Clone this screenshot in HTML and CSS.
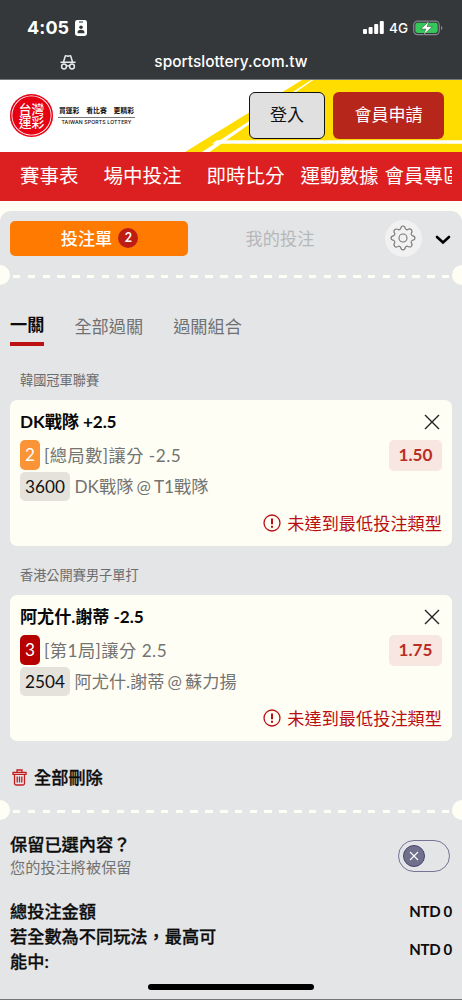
FILE: index.html
```html
<!DOCTYPE html>
<html lang="zh-Hant">
<head>
<meta charset="utf-8">
<meta name="viewport" content="width=device-width, initial-scale=1">
<title>台灣運彩</title>
<link rel="stylesheet" href="styles.css">
</head>
<body>
<div class="screen">
  <header class="phone-bar">
    <div class="status">
      <span class="clock">4:05</span>
      <svg class="id-icon" width="12" height="16" viewBox="0 0 12 16"><rect width="12" height="16" rx="2.4" fill="#fff"/><path d="M4 2h4" stroke="#35383b" stroke-width="1.1"/><circle cx="6" cy="7.3" r="1.8" fill="#35383b"/><path d="M2.6 13.3v-1.2c0-3 6.8-3 6.8 0v1.2z" fill="#35383b"/></svg>
      <svg class="signal" width="21" height="13" viewBox="0 0 21 13" fill="#fff"><rect y="8" width="4" height="5" rx="1"/><rect x="5.6" y="6" width="4" height="7" rx="1"/><rect x="11.2" y="3" width="4" height="10" rx="1"/><rect x="16.8" width="4" height="13" rx="1"/></svg>
      <span class="network">4G</span>
      <svg class="battery" width="30" height="16" viewBox="0 0 30 16"><rect x=".7" y="1.2" width="25.6" height="13.4" rx="3.8" fill="none" stroke="#85878a" stroke-width="1.2"/><rect x="2.3" y="2.8" width="22.4" height="10.2" rx="2.4" fill="#34c759"/><path d="M28 6v4q1.5-.6 1.5-2T28 6z" fill="#85878a"/><path d="M16.4.8 7.8 9h5L10.3 15.2l9-8.7h-5.2z" fill="#fff" stroke="#35383b" stroke-width=".5"/></svg>
    </div>
    <div class="address">
      <svg class="incognito" width="16" height="15" viewBox="0 0 16 15" fill="none" stroke="#e9eaeb" stroke-width="1.5"><path d="M.5 7.3h15M3.5 7 5.2 1.2q.2-.6.9-.4l1.9.4 1.9-.4q.7-.2.9.4L12.500 7"/><circle cx="4" cy="11.5" r="2.4"/><circle cx="12" cy="11.5" r="2.4"/><path d="M6.5 11.2q1.5-1 3 0"/></svg>
      <span>sportslottery.com.tw</span>
    </div>
  </header>

  <div class="banner">
    <svg class="stripes" width="462" height="72" viewBox="0 0 462 72"><path d="M185 72 302 0H462V72z" fill="#fd0"/><path d="M202 72 231 53 311 0h2.3L231 57 209.5 72z" fill="#fff"/><path d="M217 60.3H462v3.5H212z" fill="#fff"/></svg>
    <div class="brand">
      <div class="seal"><span>台灣</span><span>運彩</span></div>
      <div class="slogan">
        <div class="slogan-zh"><span>買運彩</span><span>看比賽</span><span>更精彩</span></div>
        <div class="slogan-en">TAIWAN SPORTS LOTTERY</div>
      </div>
    </div>
    <button class="btn login">登入</button>
    <button class="btn join">會員申請</button>
  </div>

  <nav class="nav"><span>賽事表</span><span>場中投注</span><span>即時比分</span><span>運動數據</span><span>會員專區</span></nav>

  <main class="slip">
    <div class="slip-head">
      <div class="slip-tab active">投注單<span class="count">2</span></div>
      <div class="slip-tab">我的投注</div>
      <div class="gear"><svg width="26" height="26" viewBox="-13 -13 26 26" fill="none" stroke="#777" stroke-width="1.1"><circle r="4"/><path d="M-2.4-9.2Q-1.9-12 0-12T2.4-9.2Q3-8.3 4.2-8.1 6.8-10 8.3-8.3T8.1-4.2Q8.3-3 9.2-2.4 12-1.9 12 0T9.2 2.4Q8.3 3 8.1 4.2 10 6.8 8.3 8.3T4.2 8.1Q3 8.3 2.4 9.2 1.9 12 0 12T-2.4 9.2Q-3 8.3-4.2 8.1-6.8 10-8.3 8.3T-8.1 4.2Q-8.3 3-9.2 2.4-12 1.9-12 0T-9.2-2.4Q-8.3-3-8.1-4.2-10-6.8-8.3-8.3T-4.2-8.1Q-3-8.3-2.4-9.2z"/></svg></div>
      <svg class="chevron" width="16" height="10" viewBox="0 0 16 10"><path d="m2 2 6 5.5L14 2" fill="none" stroke="#000" stroke-width="2.6" stroke-linecap="round"/></svg>
    </div>

    <div class="tear"><i></i></div>

    <div class="modes"><span class="mode on">一關</span><span class="mode">全部過關</span><span class="mode">過關組合</span></div>

    <div class="league">韓國冠軍聯賽</div>
    <section class="card">
      <div class="row title"><span>DK戰隊 +2.5</span><svg width="16" height="16" viewBox="0 0 16 16"><path d="m1 1 14 14M15 1 1 15" stroke="#222" stroke-width="1.4"/></svg></div>
      <div class="row pick"><span class="num orange">2</span><span class="market">[總局數]讓分 -2.5</span><span class="odds">1.50</span></div>
      <div class="row match"><span class="code">3600</span><span class="teams">DK戰隊 @ T1戰隊</span></div>
      <div class="warn"><svg width="18" height="18" viewBox="0 0 18 18"><circle cx="9" cy="9" r="8" fill="none" stroke="#b90f12" stroke-width="1.3"/><path d="M9 4.5v5.7M9 11.8v2" stroke="#b90f12" stroke-width="2"/></svg><span>未達到最低投注類型</span></div>
    </section>

    <div class="league">香港公開賽男子單打</div>
    <section class="card">
      <div class="row title"><span>阿尤什.謝蒂 -2.5</span><svg width="16" height="16" viewBox="0 0 16 16"><path d="m1 1 14 14M15 1 1 15" stroke="#222" stroke-width="1.4"/></svg></div>
      <div class="row pick"><span class="num red">3</span><span class="market narrow">[第1局]讓分 2.5</span><span class="odds">1.75</span></div>
      <div class="row match"><span class="code">2504</span><span class="teams">阿尤什.謝蒂 @ 蘇力揚</span></div>
      <div class="warn"><svg width="18" height="18" viewBox="0 0 18 18"><circle cx="9" cy="9" r="8" fill="none" stroke="#b90f12" stroke-width="1.3"/><path d="M9 4.5v5.7M9 11.8v2" stroke="#b90f12" stroke-width="2"/></svg><span>未達到最低投注類型</span></div>
    </section>

    <div class="clear"><svg width="15" height="17" viewBox="0 0 15 17" fill="none" stroke="#c51c1f" stroke-width="1.3"><path d="M5 3V1h5v2M1 3.3h13v2H1zM2.5 5.5v9q0 1.5 1.5 1.5h7q1.500 0 1.500-1.500v-9M5.200 7.500v6M7.500 7.500v6M9.800 7.500v6"/></svg><span>全部刪除</span></div>

    <div class="tear"><i></i></div>

    <div class="keep">
      <div><div class="keep-title">保留已選內容？</div><div class="keep-note">您的投注將被保留</div></div>
      <div class="toggle"><span class="knob"><svg width="10" height="10" viewBox="0 0 10 10"><path d="m1 1 8 8M9 1 1 9" stroke="#fff" stroke-width="1.1"/></svg></span></div>
    </div>
    <div class="totals">
      <div class="total"><span>總投注金額</span><b>NTD 0</b></div>
      <div class="total"><span>若全數為不同玩法，最高可能中:</span><b>NTD 0</b></div>
    </div>
    <div class="home"></div>
  </main>
</div>
</body>
</html>
```
FILE: styles.css
```css
* { box-sizing: border-box; }
body { margin: 0; background: #fffef5; color: #0c0c0c; font-family: Lato, "Noto Sans CJK TC", sans-serif; }
svg { display: block; flex: none; }
span { white-space: nowrap; }
.screen { width: 462px; height: 1000px; overflow: hidden; display: flex; flex-direction: column; }

.phone-bar { height: 80px; flex: none; background: #35383b; color: #fff; border-bottom: 1px solid #77797b; font-family: Inter, sans-serif; }
.status { display: flex; align-items: center; height: 38px; padding: 17px 19px 0 27px; }
.clock { font-size: 18px; font-weight: 700; width: 43px; letter-spacing: .1px; }
.id-icon { margin-left: 5px; }
.signal { margin-left: auto; }
.network { font-size: 13.5px; font-weight: 500; margin: 0 5px; }
.address { position: relative; display: flex; justify-content: center; height: 41px; padding-top: 14px; font-size: 15.4px; line-height: 20px; font-weight: 500; letter-spacing: .03px; }
.incognito { position: absolute; left: 60px; top: 17px; }

.banner { position: relative; height: 72px; flex: none; background: #fff; display: flex; align-items: center; padding: 0 18px 1px 10px; }
.stripes { position: absolute; left: 0; top: 0; }
.brand { display: flex; align-items: center; gap: 5px; margin-right: auto; z-index: 1; }
.seal { width: 43px; height: 43px; border-radius: 50%; background: #e60012; box-shadow: inset 0 0 0 1.5px #e60012, inset 0 0 0 2.3px #fff; color: #fff; display: flex; flex-direction: column; align-items: center; justify-content: center; font-size: 12.8px; line-height: 13px; font-weight: 500; }
.slogan { width: 77px; }
.slogan-zh { display: flex; justify-content: space-between; font-size: 6.8px; line-height: 11px; font-weight: 700; border-bottom: 1px solid #777; padding: 0 1px 1px; }
.slogan-en { font: 500 5.15px/9px Inter, sans-serif; letter-spacing: .15px; text-align: center; white-space: nowrap; }
.btn { position: relative; height: 47px; border-radius: 6px; font: 17px/1 Lato, "Noto Sans CJK TC", sans-serif; padding: 0 0 2px; }
.login { width: 76px; background: #e0e0e0; border: 1px solid #111; color: #111; }
.join { width: 111px; margin-left: 8px; background: #b7261b; border: 0; color: #fff; }

.nav { height: 49px; flex: none; margin-bottom: 10px; padding: 0 10px 0 20px; background: #dc1f20; color: #fff; font-size: 19.5px; line-height: 48px; display: flex; }
.nav span + span { margin-left: 25px; }
.nav span:nth-child(4) { margin-left: 16px; }
.nav span:nth-child(5) { margin-left: 6px; width: 67px; overflow: hidden; }

.slip { flex: 1; position: relative; background: #e4e5e7; border-radius: 11px 11px 0 0; border-bottom: 1px solid #777; }
.slip-head { display: flex; align-items: center; height: 54px; padding: 0 11px 0 10px; font-size: 17.2px; }
.slip-tab { width: 184px; text-align: center; color: #b6b7b9; line-height: 35px; }
.slip-tab.active { display: flex; justify-content: center; align-items: center; gap: 6px; width: 178px; height: 35px; padding-left: 1px; border-radius: 5px; background: #ff7a00; color: #fff; font-weight: 500; }
.count { width: 20px; height: 20px; border-radius: 50%; background: #bd1d13; font-size: 12.5px; line-height: 19px; text-align: center; font-weight: 700; }
.gear { width: 37px; height: 37px; border-radius: 50%; background: #f1f1f1; margin-left: 12.5px; display: flex; align-items: center; justify-content: center; }
.chevron { margin: 4px 0 0 13.5px; }
.tear { height: 21px; display: flex; justify-content: space-between; align-items: center; overflow: hidden; margin-top: -1px; }
.tear::before, .tear::after { content: ""; width: 20px; height: 20px; border-radius: 50%; background: #fffef5; flex: none; }
.tear::before { margin-left: -10px; }
.tear::after { margin-right: -10px; }
.tear i { width: 436px; height: 3px; margin-top: 3px; background: repeating-linear-gradient(90deg, #fffef5 0 7.5px, transparent 7.5px 14.79px); }

.modes { display: flex; gap: 30px; height: 61px; padding-left: 10px; align-items: flex-end; font-size: 17.2px; }
.mode { height: 36px; line-height: 33px; color: #707173; }
.mode.on { font-weight: 700; color: #0b0b0b; line-height: 30px; border-bottom: 4px solid #bd1013; }
.league { height: 54px; padding: 20px 20px 0; line-height: 28px; font-size: 13.2px; color: #6b6c6e; }
.card { height: 146px; margin: 0 10px; padding: 7px 10px 0; border-radius: 7px; background: #fffef5; font-size: 17.2px; color: #737371; }
.card + .league { height: 49px; padding-top: 15px; }
.row { display: flex; align-items: center; }
.title { height: 31px; justify-content: space-between; color: #080808; font-weight: 700; padding: 0 2px 3px 0; letter-spacing: -.1px; }
.title span { padding-bottom: 1px; }
.title svg { margin-top: 1px; }
.pick { height: 34px; }
.num { width: 20px; height: 30px; line-height: 30px; border-radius: 5px; color: #fff; text-align: center; margin-right: 4px; }
.orange { background: #fb9337; }
.red { background: #b60000; }
.market { letter-spacing: .5px; padding-bottom: 2px; }
.odds { width: 53px; height: 31px; line-height: 30px; margin-left: auto; border-radius: 5px; background: #f8e7e0; color: #b92e25; font-weight: 700; text-align: center; }
.match { height: 29px; gap: 5px; }
.teams { word-spacing: -1.3px; padding-bottom: 2px; margin-left: -.5px; }
.code { width: 50px; height: 29px; line-height: 30px; border-radius: 5px; background: #e5e2dc; color: #111; text-align: center; }
.warn { display: flex; justify-content: flex-end; align-items: center; gap: 6px; height: 28px; margin-top: 8px; color: #b90f12; }
.warn span { padding-bottom: 2px; }
.clear { display: flex; align-items: center; gap: 7px; height: 59px; padding: 13px 0 0 12px; font-size: 17.2px; font-weight: 500; -webkit-text-stroke: .3px; }
.clear span { padding-bottom: 2px; }
.keep { display: flex; justify-content: space-between; padding: 13px 12px 0 10px; height: 79px; }
.keep-title { font-size: 17.2px; line-height: 24px; font-weight: 500; -webkit-text-stroke: .3px; }
.keep-note { font-size: 15.2px; line-height: 21px; color: #707173; }
.toggle { width: 52px; height: 32px; margin-top: 7px; border: 1px solid #767493; border-radius: 16px; padding: 4px; }
.knob { width: 22px; height: 22px; border: 1px solid #47456c; border-radius: 50%; background: #706f8c; display: flex; align-items: center; justify-content: center; }
.totals { padding: 0 10px; font-size: 17.2px; line-height: 25px; font-weight: 500; }
.total { display: flex; justify-content: space-between; align-items: center; }
.total span { width: 210px; white-space: normal; -webkit-text-stroke: .3px; }
.total b { font-size: 15px; font-weight: 700; letter-spacing: -.3px; }
.home { position: absolute; left: 148px; bottom: 9px; width: 166px; height: 6px; border-radius: 3px; background: #000; }
```
